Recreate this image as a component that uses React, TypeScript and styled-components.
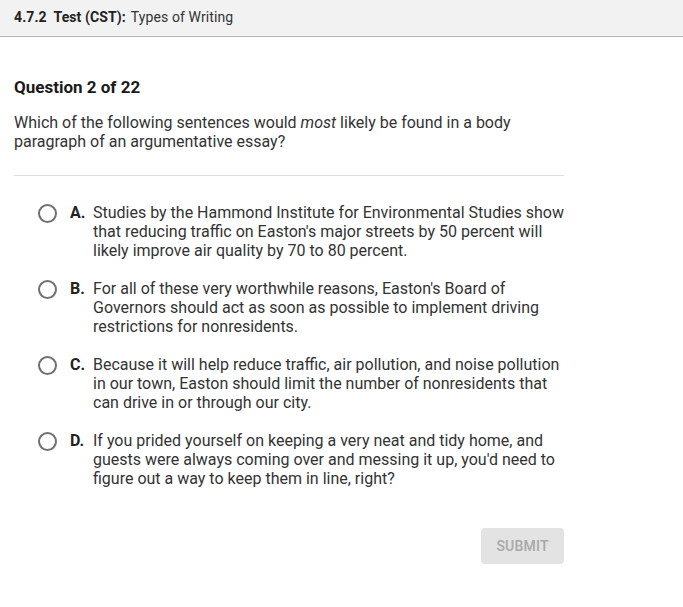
import React from "react";
import styled, { createGlobalStyle } from "styled-components";

const GlobalStyle = createGlobalStyle`
  html, body {
    margin: 0;
    padding: 0;
    background: #ffffff;
    font-family: Roboto, "Liberation Sans", Arial, sans-serif;
    color: #222;
  }
`;

const Page = styled.div`
  width: 683px;
  min-height: 607px;
  display: flex;
  flex-direction: column;
`;

const Header = styled.div`
  height: 37px;
  box-sizing: border-box;
  background: #f2f2f2;
  border-bottom: 1px solid #b5b5b5;
  display: flex;
  align-items: center;
  padding: 0 14px 3px;
  font-size: 14px;
  color: #333;
  letter-spacing: 0.1px;
`;

const HeaderBold = styled.span`
  font-weight: 700;
  color: #222;
  margin-right: 5px;
`;

const Content = styled.div`
  width: 550px;
  padding: 39px 0 0 14px;
  display: flex;
  flex-direction: column;
`;

const Title = styled.h2`
  margin: 0;
  font-size: 17px;
  font-weight: 700;
  line-height: 22px;
  color: #1a1a1a;
`;

const Prompt = styled.p`
  margin: 15px 0 0;
  font-size: 16px;
  line-height: 19px;
  color: #333;
`;

const Divider = styled.hr`
  border: 0;
  border-top: 1px solid #dedede;
  margin: 24px 0 0;
`;

const Options = styled.div`
  display: flex;
  flex-direction: column;
  gap: 19px;
  margin-top: 27px;
`;

const Option = styled.label`
  display: flex;
  align-items: flex-start;
  font-size: 16px;
  line-height: 19px;
  color: #333;
  cursor: pointer;
`;

const Radio = styled.span`
  width: 19px;
  height: 19px;
  border: 2px solid #707070;
  border-radius: 50%;
  box-sizing: border-box;
  flex: none;
  margin: 1px 13px 0 24px;
`;

const Letter = styled.span`
  font-weight: 700;
  width: 23px;
  flex: none;
  color: #222;
`;

const OptionText = styled.span`
  flex: 1;
`;

const Footer = styled.div`
  display: flex;
  justify-content: flex-end;
  margin-top: 40px;
`;

const SubmitButton = styled.button`
  width: 83px;
  height: 36px;
  border: 0;
  border-radius: 4px;
  background: #e3e3e3;
  color: #a8a8a8;
  font-family: Roboto, "Liberation Sans", Arial, sans-serif;
  font-size: 14px;
  font-weight: 500;
  letter-spacing: 0.2px;
`;

const choices = [
  {
    letter: "A.",
    text: "Studies by the Hammond Institute for Environmental Studies show that reducing traffic on Easton's major streets by 50 percent will likely improve air quality by 70 to 80 percent.",
  },
  {
    letter: "B.",
    text: "For all of these very worthwhile reasons, Easton's Board of Governors should act as soon as possible to implement driving restrictions for nonresidents.",
  },
  {
    letter: "C.",
    text: "Because it will help reduce traffic, air pollution, and noise pollution in our town, Easton should limit the number of nonresidents that can drive in or through our city.",
  },
  {
    letter: "D.",
    text: "If you prided yourself on keeping a very neat and tidy home, and guests were always coming over and messing it up, you'd need to figure out a way to keep them in line, right?",
  },
];

export default function App() {
  return (
    <Page>
      <GlobalStyle />
      <Header>
        <HeaderBold>4.7.2&nbsp; Test (CST):</HeaderBold> Types of Writing
      </Header>
      <Content>
        <Title>Question 2 of 22</Title>
        <Prompt>
          Which of the following sentences would <em>most</em> likely be found in a body paragraph of an argumentative essay?
        </Prompt>
        <Divider />
        <Options>
          {choices.map((c) => (
            <Option key={c.letter}>
              <Radio />
              <Letter>{c.letter}</Letter>
              <OptionText>{c.text}</OptionText>
            </Option>
          ))}
        </Options>
        <Footer>
          <SubmitButton disabled>SUBMIT</SubmitButton>
        </Footer>
      </Content>
    </Page>
  );
}
